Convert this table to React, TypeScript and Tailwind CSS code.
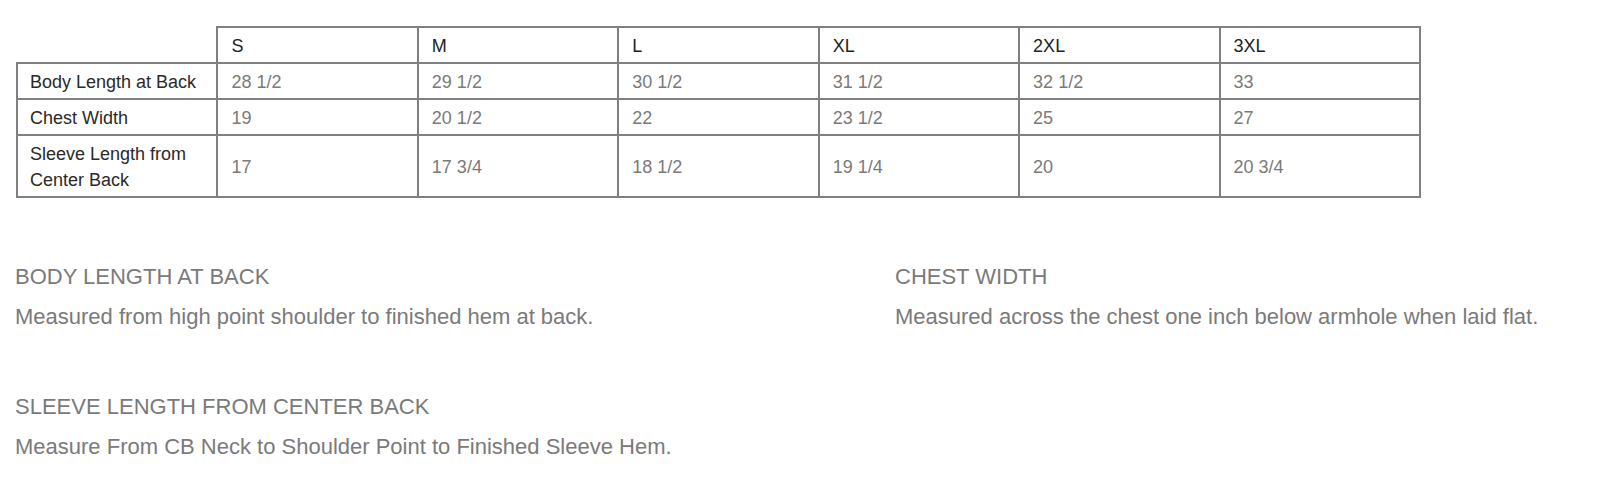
import React from "react";

const sizes = ["S", "M", "L", "XL", "2XL", "3XL"];
const rows: { label: React.ReactNode; values: string[] }[] = [
  { label: "Body Length at Back", values: ["28 1/2", "29 1/2", "30 1/2", "31 1/2", "32 1/2", "33"] },
  { label: "Chest Width", values: ["19", "20 1/2", "22", "23 1/2", "25", "27"] },
  {
    label: (
      <>
        Sleeve Length from
        <br />
        Center Back
      </>
    ),
    values: ["17", "17 3/4", "18 1/2", "19 1/4", "20", "20 3/4"],
  },
];

const notes = [
  { title: "BODY LENGTH AT BACK", text: "Measured from high point shoulder to finished hem at back." },
  { title: "CHEST WIDTH", text: "Measured across the chest one inch below armhole when laid flat." },
  { title: "SLEEVE LENGTH FROM CENTER BACK", text: "Measure From CB Neck to Shoulder Point to Finished Sleeve Hem." },
];

export default function App() {
  return (
    <div
      className="w-[1620px] h-[498px] bg-white overflow-hidden"
      style={{ fontFamily: '"Liberation Sans", Arial, Helvetica, sans-serif' }}
    >
      <div className="pt-[26px] pl-[16px]">
        <table className="table-fixed border-collapse w-[1403px] text-[18px] leading-[26px]">
          <colgroup>
            {Array.from({ length: 7 }).map((_, i) => (
              <col key={i} className="w-[200.43px]" />
            ))}
          </colgroup>
          <thead>
            <tr>
              <th className="border-0 p-0"></th>
              {sizes.map((s) => (
                <th
                  key={s}
                  className="border-2 border-[#808080] text-left font-normal text-[#222222] pl-[13px] pt-[5px] pb-[3px] align-middle"
                >
                  {s}
                </th>
              ))}
            </tr>
          </thead>
          <tbody>
            {rows.map((r, i) => (
              <tr key={i}>
                <td className="border-2 border-[#808080] text-[#2a2a2a] pl-[12px] pt-[5px] pb-[3px] align-middle">
                  {r.label}
                </td>
                {r.values.map((v, j) => (
                  <td
                    key={j}
                    className="border-2 border-[#808080] text-[#7a7a7a] pl-[13px] pt-[5px] pb-[3px] align-middle"
                  >
                    {v}
                  </td>
                ))}
              </tr>
            ))}
          </tbody>
        </table>
      </div>

      <div className="grid grid-cols-[880px_1fr] gap-y-[60px] pl-[15px] mt-[64px] text-[#7a7a7a] text-[22px] leading-[30px]">
        {notes.map((n) => (
          <div key={n.title} className="flex flex-col gap-[10px]">
            <div>{n.title}</div>
            <div>{n.text}</div>
          </div>
        ))}
      </div>
    </div>
  );
}
